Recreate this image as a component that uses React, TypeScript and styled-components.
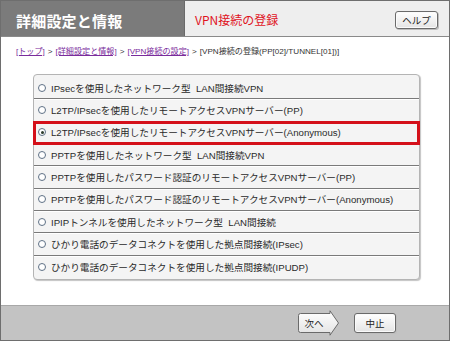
import React from "react";
import styled, { createGlobalStyle } from "styled-components";

const GlobalStyle = createGlobalStyle`
  html, body { margin: 0; padding: 0; background: #ffffff; }
  body { font-family: "Noto Sans CJK JP", "Noto Sans", sans-serif; }
  * { box-sizing: border-box; }
`;

const Frame = styled.div`
  width: 450px;
  height: 341px;
  border: 1px solid #6e6e6e;
  display: flex;
  flex-direction: column;
  background: #fff;
  overflow: hidden;
`;

const Header = styled.header`
  height: 36px;
  display: flex;
  border-bottom: 1px solid #8a8a8a;
  flex: none;
`;

const SectionTitle = styled.div`
  width: 184px;
  background: #7b7b7b;
  color: #ffffff;
  font-size: 15px;
  font-weight: bold;
  display: flex;
  align-items: center;
  padding: 3px 0 0 15px;
  letter-spacing: 0.2px;
  border-right: 1px solid #6a6a6a;
`;

const PageBar = styled.div`
  flex: 1;
  background: #eeeeee;
  display: flex;
  align-items: center;
  justify-content: space-between;
  padding: 2px 11px 0 10px;
`;

const PageTitle = styled.span`
  color: #e0141e;
  font-size: 12px;
`;

const SmallButton = styled.button<{ $w: number; $h: number }>`
  width: ${(p) => p.$w}px;
  height: ${(p) => p.$h}px;
  border: 1px solid #6a6a6a;
  border-radius: 3px;
  background: linear-gradient(#ffffff, #e4e4e4);
  box-shadow: inset 0 0 0 1px #fafafa, 1px 1px 0 #bdbdbd;
  font-family: inherit;
  font-size: 9.5px;
  color: #222;
  padding: 0;
  display: flex;
  align-items: center;
  justify-content: center;
  cursor: pointer;
`;

const Content = styled.main`
  flex: 1;
  display: flex;
  flex-direction: column;
  padding: 9px 0 0 15px;
`;

const Breadcrumb = styled.nav`
  font-family: "Liberation Sans", "Noto Sans CJK JP", sans-serif;
  font-size: 8.1px;
  line-height: 12px;
  color: #333;
  white-space: nowrap;
`;

const Crumb = styled.a`
  color: #7a2b9c;
  text-decoration: underline;
`;

const Sep = styled.span`
  margin: 0 3px;
  color: #333;
`;

const ListBox = styled.div`
  margin: 16px 0 0 17px;
  width: 387px;
  border: 1px solid #b4b4b4;
  border-radius: 4px;
  background: #f4f4f4;
  box-shadow: 1px 1px 1px #c4c4c4;
  padding: 2px 0 1px;
  display: flex;
  flex-direction: column;
`;

const Row = styled.label<{ $selected?: boolean; $last?: boolean }>`
  height: 22.35px;
  display: flex;
  align-items: center;
  gap: 5px;
  padding: 0 0 0 4px;
  font-family: "Liberation Sans", "Noto Sans CJK JP", sans-serif;
  font-size: 9.65px;
  color: #2a2a2a;
  white-space: pre;
  border-bottom: ${(p) => (p.$last ? "none" : "1px solid #7a7a7a")};
  box-shadow: ${(p) => (p.$last ? "none" : "0 1px 0 #ffffff")};
  position: relative;
  z-index: ${(p) => (p.$selected ? 1 : 0)};
  outline: ${(p) => (p.$selected ? "3px solid #d4101a" : "none")};
  outline-offset: -2px;
`;

const Radio = styled.span<{ $checked?: boolean }>`
  width: 8px;
  height: 8px;
  border-radius: 50%;
  border: 1px solid #5f7186;
  background: #ffffff;
  flex: none;
  display: flex;
  align-items: center;
  justify-content: center;
  &::after {
    content: "";
    width: 3px;
    height: 3px;
    border-radius: 50%;
    background: ${(p) => (p.$checked ? "#2a3a2a" : "transparent")};
  }
`;

const Footer = styled.footer`
  height: 35px;
  flex: none;
  border-top: 1px solid #a8a8a8;
  background: #c3c3c3;
  display: flex;
  align-items: center;
  justify-content: flex-end;
  gap: 14px;
  padding: 0 53px 1px 0;
`;

const NextButton = styled.button`
  position: relative;
  width: 43px;
  height: 26px;
  border: none;
  background: none;
  padding: 0 9px 0 0;
  font-family: inherit;
  font-size: 9.5px;
  color: #222;
  cursor: pointer;
  display: flex;
  align-items: center;
  justify-content: center;
`;

const NextShape = styled.svg`
  position: absolute;
  inset: 0;
`;

const NextLabel = styled.span`
  position: relative;
`;

const options = [
  "IPsecを使用したネットワーク型  LAN間接続VPN",
  "L2TP/IPsecを使用したリモートアクセスVPNサーバー(PP)",
  "L2TP/IPsecを使用したリモートアクセスVPNサーバー(Anonymous)",
  "PPTPを使用したネットワーク型  LAN間接続VPN",
  "PPTPを使用したパスワード認証のリモートアクセスVPNサーバー(PP)",
  "PPTPを使用したパスワード認証のリモートアクセスVPNサーバー(Anonymous)",
  "IPIPトンネルを使用したネットワーク型  LAN間接続",
  "ひかり電話のデータコネクトを使用した拠点間接続(IPsec)",
  "ひかり電話のデータコネクトを使用した拠点間接続(IPUDP)",
];

export default function App() {
  const selected = 2;
  return (
    <>
      <GlobalStyle />
      <Frame>
        <Header>
          <SectionTitle>詳細設定と情報</SectionTitle>
          <PageBar>
            <PageTitle>VPN接続の登録</PageTitle>
            <SmallButton $w={43} $h={18}>ヘルプ</SmallButton>
          </PageBar>
        </Header>
        <Content>
          <Breadcrumb>
            <Crumb>[トップ]</Crumb>
            <Sep>&gt;</Sep>
            <Crumb>[詳細設定と情報]</Crumb>
            <Sep>&gt;</Sep>
            <Crumb>[VPN接続の設定]</Crumb>
            <Sep>&gt;</Sep>
            <span>[VPN接続の登録(PP[02]/TUNNEL[01])]</span>
          </Breadcrumb>
          <ListBox>
            {options.map((o, i) => (
              <Row key={o} $selected={i === selected} $last={i === options.length - 1}>
                <Radio $checked={i === selected} />
                {o}
              </Row>
            ))}
          </ListBox>
        </Content>
        <Footer>
          <NextButton>
            <NextShape width="43" height="26" viewBox="0 0 43 26">
              <defs>
                <linearGradient id="ng" x1="0" y1="0" x2="0" y2="1">
                  <stop offset="0" stopColor="#ffffff" />
                  <stop offset="1" stopColor="#e2e2e2" />
                </linearGradient>
              </defs>
              <path
                d="M3.5 3.5 H33 L33 0.8 L41.5 13 L33 25.2 L33 22.5 H3.5 Q1.5 22.5 1.5 20.5 V5.5 Q1.5 3.5 3.5 3.5 Z"
                fill="url(#ng)"
                stroke="#6a6a6a"
                strokeWidth="1"
              />
            </NextShape>
            <NextLabel>次へ</NextLabel>
          </NextButton>
          <SmallButton $w={42} $h={20}>中止</SmallButton>
        </Footer>
      </Frame>
    </>
  );
}
